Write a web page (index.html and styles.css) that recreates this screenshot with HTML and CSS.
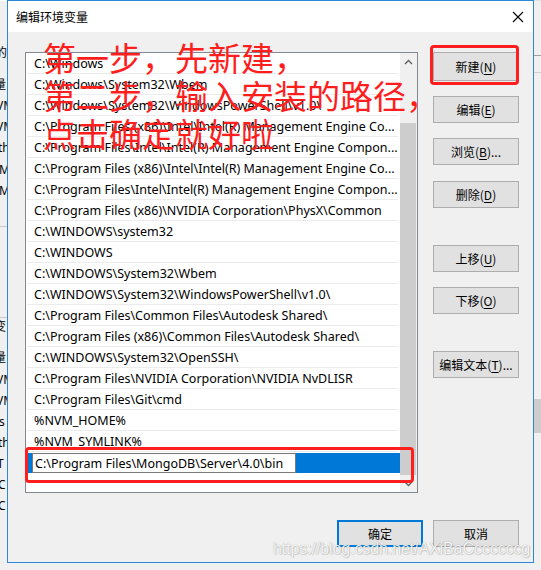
FILE: index.html
```html
<!DOCTYPE html>
<html lang="zh-CN">
<head>
<meta charset="utf-8">
<title>编辑环境变量</title>
<link rel="stylesheet" href="styles.css">
</head>
<body>
<div class="desk">
  <div class="bg-left">
    <div class="frag f1">的</div>
    <div class="frag f2">量</div>
    <div class="frag f3">VM</div>
    <div class="frag f4">VM</div>
    <div class="frag f5">th</div>
    <div class="frag f6">M</div>
    <div class="frag f7">MP</div>
    <div class="frag f8">变</div>
    <div class="frag f9">量</div>
    <div class="frag f10">VM</div>
    <div class="frag f11">VM</div>
    <div class="frag f12">s</div>
    <div class="frag f13">th</div>
    <div class="frag f14">T</div>
    <div class="frag f15">C</div>
    <div class="frag f16">C</div>
  </div>
  <div class="bg-right"></div>

  <div class="dialog">
    <div class="titlebar">
      <span class="title">编辑环境变量</span>
      <svg class="close" width="12" height="12" viewBox="0 0 12 12"><path d="M1 1 L11 11 M11 1 L1 11" stroke="#000" stroke-width="1.1" fill="none"/></svg>
    </div>
    <div class="body">
      <div class="main">
        <div class="listbox">
          <div class="rows">
            <div class="row">C:\Windows</div>
            <div class="row">C:\Windows\System32\Wbem</div>
            <div class="row">C:\Windows\System32\WindowsPowerShell\v1.0\</div>
            <div class="row">C:\Program Files (x86)\Intel\Intel(R) Management Engine Co...</div>
            <div class="row">C:\Program Files\Intel\Intel(R) Management Engine Compon...</div>
            <div class="row">C:\Program Files (x86)\Intel\Intel(R) Management Engine Co...</div>
            <div class="row">C:\Program Files\Intel\Intel(R) Management Engine Compon...</div>
            <div class="row">C:\Program Files (x86)\NVIDIA Corporation\PhysX\Common</div>
            <div class="row">C:\WINDOWS\system32</div>
            <div class="row">C:\WINDOWS</div>
            <div class="row">C:\WINDOWS\System32\Wbem</div>
            <div class="row">C:\WINDOWS\System32\WindowsPowerShell\v1.0\</div>
            <div class="row">C:\Program Files\Common Files\Autodesk Shared\</div>
            <div class="row">C:\Program Files (x86)\Common Files\Autodesk Shared\</div>
            <div class="row">C:\WINDOWS\System32\OpenSSH\</div>
            <div class="row">C:\Program Files\NVIDIA Corporation\NVIDIA NvDLISR</div>
            <div class="row">C:\Program Files\Git\cmd</div>
            <div class="row">%NVM_HOME%</div>
            <div class="row">%NVM_SYMLINK%</div>
            <div class="row row-edit"><span class="editbox">C:\Program Files\MongoDB\Server\4.0\bin</span></div>
          </div>
          <div class="scrollbar">
            <div class="sb-btn"><svg width="9" height="6" viewBox="0 0 9 6"><path d="M1 5 L4.5 1.5 L8 5" stroke="#606060" stroke-width="1.4" fill="none"/></svg></div>
            <div class="sb-track"><div class="sb-thumb"></div></div>
            <div class="sb-btn sb-down"><svg width="9" height="6" viewBox="0 0 9 6"><path d="M1 1 L4.5 4.5 L8 1" stroke="#606060" stroke-width="1.4" fill="none"/></svg></div>
          </div>
        </div>
        <div class="side">
          <button class="btn btn-new">新建(<u>N</u>)</button>
          <button class="btn gap-s">编辑(<u>E</u>)</button>
          <button class="btn gap-s">浏览(<u>B</u>)...</button>
          <button class="btn gap-s">删除(<u>D</u>)</button>
          <button class="btn gap-l">上移(<u>U</u>)</button>
          <button class="btn gap-s">下移(<u>O</u>)</button>
          <button class="btn gap-l">编辑文本(<u>T</u>)...</button>
        </div>
      </div>
      <div class="footer">
        <button class="btn btn-ok">确定</button>
        <button class="btn">取消</button>
      </div>
    </div>

    <div class="note">第一步，先新建，<br>第二步，输入安装的路径，<br>点击确定就好啦</div>
    <div class="mark mark-new"></div>
    <div class="mark mark-edit"></div>
  </div>

  <div class="watermark">https://blog.csdn.net/AXiBaCccccccg</div>
</div>
</body>
</html>
```
FILE: styles.css
```css
* { box-sizing: border-box; }
html, body { margin: 0; padding: 0; }
body {
  background: #f0f0f0;
  font-family: "Noto Sans", "Noto Sans CJK SC", sans-serif;
  font-size: 12px;
  color: #000;
}
.desk {
  position: relative;
  width: 541px;
  height: 570px;
  overflow: hidden;
  background: #f0f0f0;
}

/* background window fragments */
.bg-left {
  position: absolute;
  left: 0;
  top: 0;
  width: 7px;
  height: 562px;
  overflow: hidden;
  background: #f0f0f0;
  border-top: 1px solid #fff;
}
.frag {
  position: absolute;
  left: -4px;
  font-family: "Noto Sans", "Noto Sans CJK SC", sans-serif;
  font-size: 12px;
  line-height: 16px;
  white-space: nowrap;
}
.f1 { top: 44px; left: -5px; }
.f2 { top: 76px; left: -6px; }
.f3 { top: 97px; }
.f4 { top: 118px; }
.f5 { top: 139px; left: -2px; }
.f6 { top: 161px; left: -1px; }
.f7 { top: 182px; left: -1px; }
.f8 { top: 318px; left: -6px; }
.f9 { top: 349px; left: -6px; }
.f10 { top: 371px; }
.f11 { top: 392px; }
.f12 { top: 413px; left: -1px; }
.f13 { top: 434px; left: -2px; }
.f14 { top: 455px; left: -3px; }
.f15 { top: 476px; left: -2px; }
.f16 { top: 497px; left: -2px; }
.bg-left::before {
  content: "";
  position: absolute;
  left: 0; right: 0;
  top: 225px;
  height: 90px;
  border-top: 1px solid #c8c8c8;
  border-bottom: 1px solid #c8c8c8;
}
.bg-right {
  position: absolute;
  left: 534px;
  top: 0;
  width: 7px;
  height: 562px;
  background: #f0f0f0;
  border-top: 1px solid #e0e0e0;
}
.bg-right::before {
  content: "";
  position: absolute;
  left: 0; right: 0;
  top: 54px;
  height: 16px;
  border-top: 1px solid #a0a0a0;
  border-bottom: 1px solid #d0d0d0;
}
.bg-right::after {
  content: "";
  position: absolute;
  left: 0; right: 0;
  top: 398px;
  height: 34px;
  background: #cdcdcd;
}

/* dialog */
.dialog {
  position: absolute;
  left: 7px;
  top: 0;
  width: 527px;
  height: 563px;
  border: 1px solid #2b88d8;
  background: #f0f0f0;
  display: flex;
  flex-direction: column;
}
.titlebar {
  height: 31px;
  background: #fff;
  display: flex;
  align-items: center;
  justify-content: space-between;
  padding: 0 9px 0 8px;
  flex: none;
}
.title {
  font-family: "Noto Sans CJK SC", sans-serif;
  font-size: 12px;
  line-height: 16px;
}
.close { display: block; }

.body {
  padding: 20px 14px 15px 17px;
  display: flex;
  flex-direction: column;
  flex: 1;
}
.main {
  display: flex;
  gap: 15px;
  align-items: flex-start;
}

.listbox {
  width: 393px;
  height: 441px;
  background: #fff;
  border: 1px solid #828790;
  display: flex;
  flex: none;
}
.rows {
  flex: 1;
  min-width: 0;
  display: flex;
  flex-direction: column;
}
.row {
  height: 21px;
  padding-top: 2px;
  line-height: 18px;
  padding-left: 7px;
  margin: 0 2px 0 1px;
  border-bottom: 1px solid #ececec;
  white-space: nowrap;
  overflow: hidden;
  font-family: "Noto Sans", sans-serif;
  font-size: 12.5px;
}
.row-edit {
  background: #0078d7;
  border-bottom: none;
  margin: 1px 0 0 0;
  padding: 0 0 0 6px;
  height: 20px;
  display: flex;
  align-items: stretch;
}
.editbox {
  display: block;
  width: 264px;
  height: 20px;
  background: #fff;
  border: 1px solid #7a7a7a;
  padding-left: 2px;
  line-height: 19px;
}
.scrollbar {
  width: 17px;
  background: #f0f0f0;
  display: flex;
  flex-direction: column;
  flex: none;
}
.sb-btn {
  height: 17px;
  display: flex;
  align-items: center;
  justify-content: center;
  flex: none;
}
.sb-track {
  flex: 1;
  padding-top: 53px;
  padding-right: 1px;
  display: flex;
}
.sb-thumb {
  flex: 1;
  background: #cdcdcd;
}

.side {
  display: flex;
  flex-direction: column;
  width: 86px;
}
.btn {
  width: 86px;
  height: 27px;
  background: #e1e1e1;
  border: 1px solid #adadad;
  border-radius: 0;
  padding: 0;
  font-family: "Noto Sans CJK SC", sans-serif;
  font-size: 12px;
  color: #000;
  line-height: 16px;
  text-align: center;
}
.btn u { text-decoration: underline; text-underline-offset: 2px; }
.btn-new { height: 29px; }
.gap-s { margin-top: 15px; }
.gap-l { margin-top: 37px; }
.side .btn:nth-child(2) { margin-top: 15px; }
.side .btn:nth-child(4) { margin-top: 16px; }

.footer {
  display: flex;
  justify-content: flex-end;
  gap: 10px;
  margin-top: auto;
}
.btn-ok {
  border: 2px solid #0078d7;
}

/* annotations */
.note {
  position: absolute;
  left: 35px;
  top: 37px;
  font-family: "Noto Sans CJK SC", sans-serif;
  font-size: 33px;
  line-height: 38px;
  color: #ff1e1e;
  white-space: nowrap;
  pointer-events: none;
}
.mark {
  position: absolute;
  border: 3px solid #ff1e1e;
  border-radius: 4px;
}
.mark-new { left: 422px; top: 44px; width: 89px; height: 40px; }
.mark-edit { left: 17px; top: 446px; width: 389px; height: 36px; }

.watermark {
  position: absolute;
  left: 273px;
  top: 538px;
  font-family: "Liberation Sans", sans-serif;
  font-size: 16px;
  letter-spacing: -0.1px;
  line-height: 22px;
  color: rgba(255, 255, 255, 0.9);
  text-shadow: 0 0 1px rgba(0, 0, 0, 0.35), 1px 1px 1px rgba(0, 0, 0, 0.12);
  white-space: nowrap;
}
```
